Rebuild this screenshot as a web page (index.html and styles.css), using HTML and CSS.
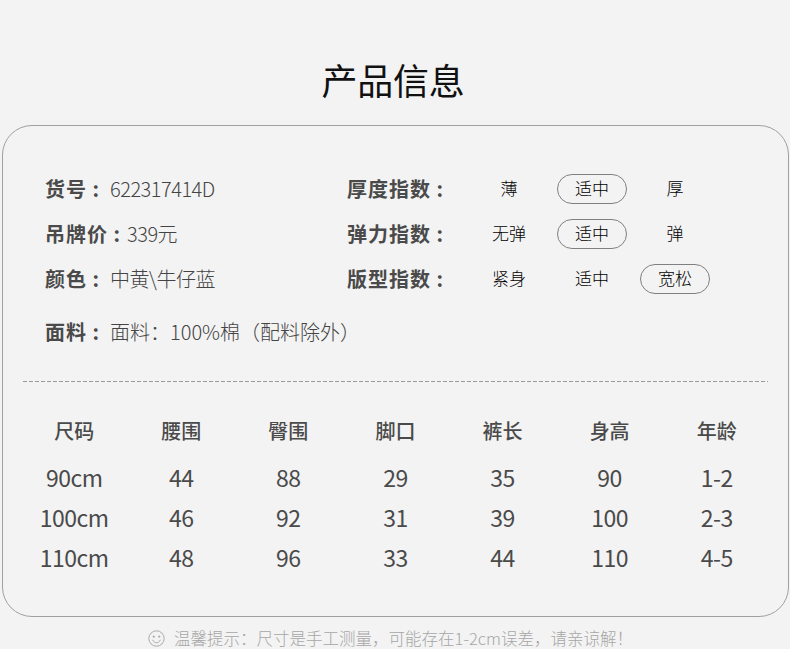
FILE: index.html
```html
<!DOCTYPE html>
<html lang="zh">
<head>
<meta charset="utf-8">
<title>产品信息</title>
<link rel="stylesheet" href="styles.css">
</head>
<body>
<h1 class="title">产品信息</h1>
<section class="card">
  <div class="info">
    <div class="basics">
      <p class="line"><b class="k k-a">货号 :</b><span class="v">622317414D</span></p>
      <p class="line"><b class="k k-b">吊牌价 :</b><span class="v">339元</span></p>
      <p class="line"><b class="k k-a">颜色 :</b><span class="v">中黄\牛仔蓝</span></p>
    </div>
    <div class="indexes">
      <div class="line idx"><b class="k k-c">厚度指数 :</b><span class="o">薄</span><span class="o on">适中</span><span class="o">厚</span></div>
      <div class="line idx"><b class="k k-c">弹力指数 :</b><span class="o">无弹</span><span class="o on">适中</span><span class="o">弹</span></div>
      <div class="line idx"><b class="k k-c">版型指数 :</b><span class="o">紧身</span><span class="o">适中</span><span class="o on">宽松</span></div>
    </div>
  </div>
  <p class="line fabric"><b class="k k-a">面料 :</b><span class="v v-wide">面料：100%棉（配料除外）</span></p>
  <div class="rule"></div>
  <div class="sizes">
    <span class="h">尺码</span><span class="h">腰围</span><span class="h">臀围</span><span class="h">脚口</span><span class="h">裤长</span><span class="h">身高</span><span class="h">年龄</span>
    <span>90cm</span><span>44</span><span>88</span><span>29</span><span>35</span><span>90</span><span>1-2</span>
    <span>100cm</span><span>46</span><span>92</span><span>31</span><span>39</span><span>100</span><span>2-3</span>
    <span>110cm</span><span>48</span><span>96</span><span>33</span><span>44</span><span>110</span><span>4-5</span>
  </div>
</section>
<p class="tip">
  <svg class="smile" width="17" height="17" viewBox="0 0 17 17" fill="none" stroke="#aaa" aria-hidden="true"><circle cx="8.5" cy="8.5" r="7.7"/><circle cx="5.8" cy="6.6" r=".7" fill="#aaa"/><circle cx="11.2" cy="6.6" r=".7" fill="#aaa"/><path d="M4.6 9.8c1 2.2 2.4 3 3.9 3s2.9-.8 3.9-3"/></svg>
  <span>温馨提示：尺寸是手工测量，可能存在1-2cm误差，请亲谅解！</span>
</p>
</body>
</html>
```
FILE: styles.css
```css
* { box-sizing: border-box; }
html, body { margin: 0; padding: 0; }
body {
  width: 790px;
  height: 649px;
  overflow: hidden;
  background: #f3f3f3;
  color: #4a4a4a;
  font-family: "Noto Sans CJK SC", "Noto Sans", sans-serif;
}
.title {
  margin: 0;
  padding-top: 53px;
  padding-right: 4px;
  height: 125px;
  font-size: 36px;
  line-height: 52px;
  font-weight: 400;
  color: #111;
  text-align: center;
  letter-spacing: -0.3px;
}
.card {
  margin-left: 2px;
  width: 787px;
  height: 492px;
  border: 1px solid #a0a0a0;
  border-radius: 30px;
  padding: 40px 21px 0 20px;
}
.info { display: flex; padding-left: 22px; }
.basics { width: 302px; }
.line {
  margin: 0;
  height: 45px;
  display: flex;
  align-items: center;
  font-size: 20px;
}
.k { font-weight: 700; color: #4a4a4a; white-space: nowrap; letter-spacing: 1px; }
.k-a { width: 65px; }
.k-b { width: 82px; }
.k-c { width: 127px; }
.v { font-weight: 300; color: #444; font-size: 20px; white-space: nowrap; letter-spacing: -0.5px; }
.v-wide { letter-spacing: 0; }
.o {
  width: 70px;
  height: 30px;
  margin-right: 13px;
  border: 1px solid transparent;
  border-radius: 15px;
  font-size: 17px;
  font-weight: 300;
  line-height: 26px;
  text-align: center;
  color: #000;
}
.on { border-color: #808080; }
.fabric { margin: 8px 0 0 22px; }
.rule {
  margin-top: 27px;
  margin-right: -1px;
  height: 1px;
  background: repeating-linear-gradient(90deg, #999 0, #999 4px, transparent 4px, transparent 6px);
}
.sizes {
  display: grid;
  grid-template-columns: repeat(7, 107.1px);
  grid-auto-rows: 40px;
  margin-top: 29px;
  margin-left: -2.4px;
  font-size: 23px;
  letter-spacing: -0.5px;
  text-align: center;
  line-height: 40px;
  color: #4a4a4a;
}
.h { font-size: 20px; font-weight: 500; height: 40px; letter-spacing: 0; }
.sizes > :nth-child(n+8) { transform: translateY(5.5px); }
.tip {
  margin: 9px 0 0;
  height: 24px;
  padding-right: 9px;
  display: flex;
  justify-content: center;
  align-items: center;
  gap: 9px;
  font-size: 16.5px;
  font-weight: 300;
  color: #a6a6a6;
}
```
